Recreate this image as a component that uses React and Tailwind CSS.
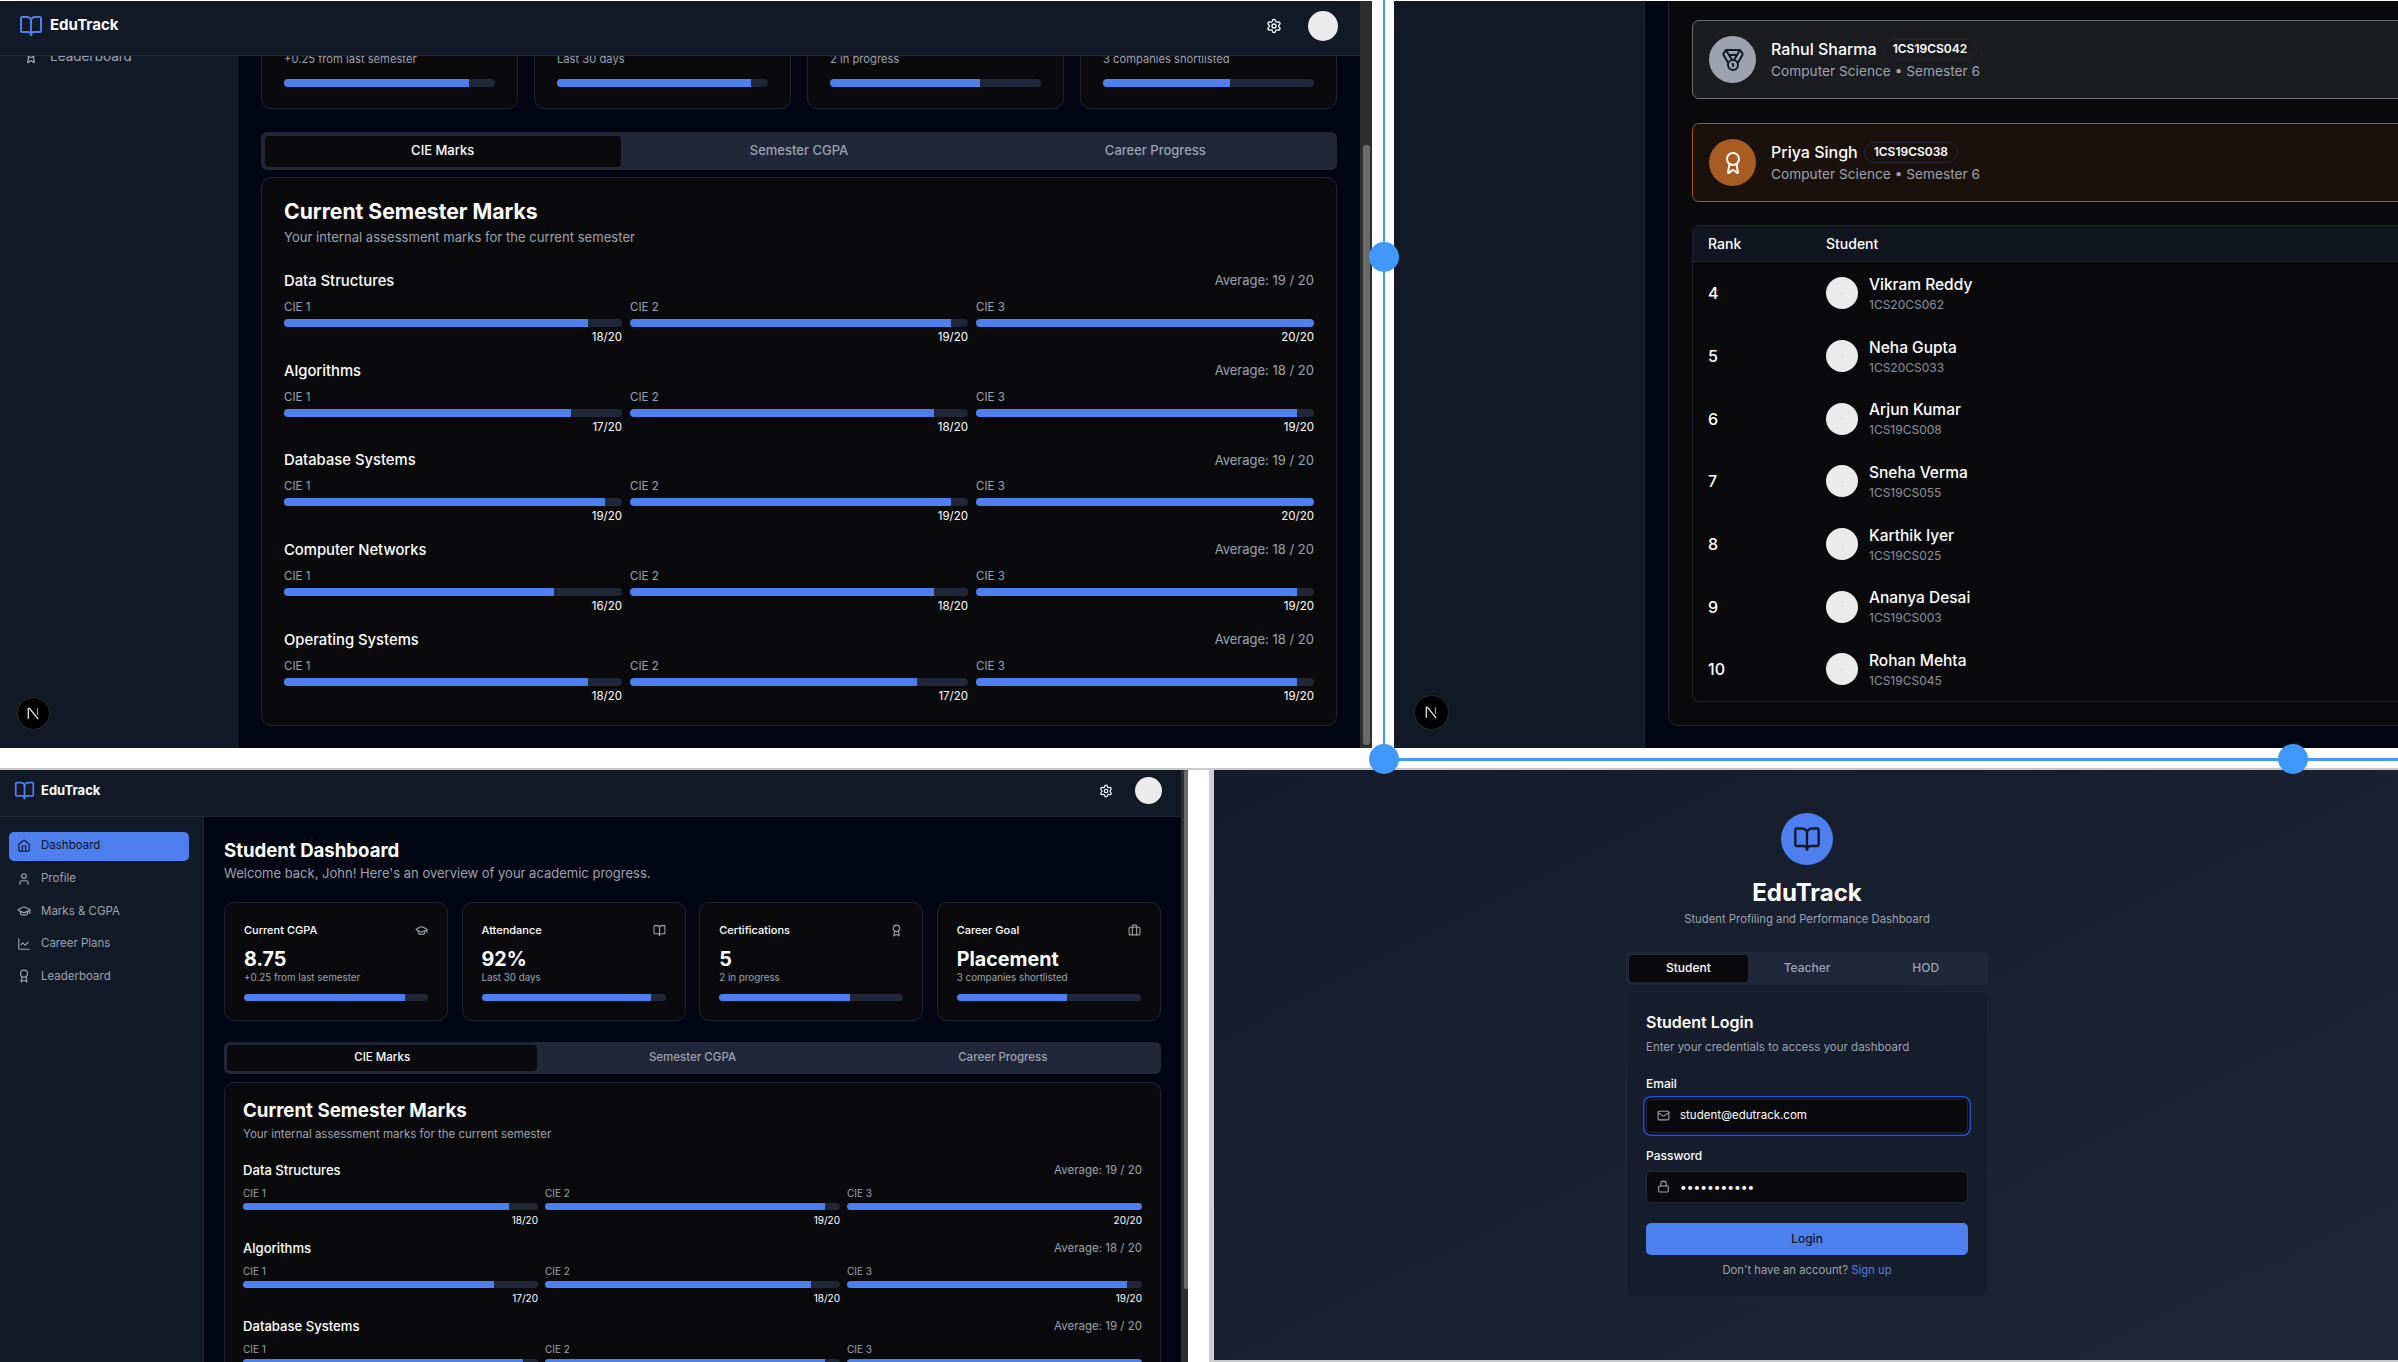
import { Award, BookOpen, Briefcase, ChartLine, GraduationCap, House, Lock, Mail, Medal, Settings, User } from "lucide-react";

const STATS = [
  { title: "Current CGPA", value: "8.75", note: "+0.25 from last semester", pct: 87.5, Icon: GraduationCap },
  { title: "Attendance", value: "92%", note: "Last 30 days", pct: 92, Icon: BookOpen },
  { title: "Certifications", value: "5", note: "2 in progress", pct: 71, Icon: Award },
  { title: "Career Goal", value: "Placement", note: "3 companies shortlisted", pct: 60, Icon: Briefcase },
];

const SUBJECTS = [
  { name: "Data Structures", avg: 19, marks: [18, 19, 20] },
  { name: "Algorithms", avg: 18, marks: [17, 18, 19] },
  { name: "Database Systems", avg: 19, marks: [19, 19, 20] },
  { name: "Computer Networks", avg: 18, marks: [16, 18, 19] },
  { name: "Operating Systems", avg: 18, marks: [18, 17, 19] },
];

const NAV = [
  { label: "Dashboard", Icon: House },
  { label: "Profile", Icon: User },
  { label: "Marks & CGPA", Icon: GraduationCap },
  { label: "Career Plans", Icon: ChartLine },
  { label: "Leaderboard", Icon: Award },
];

const RANKS = [
  { rank: 4, name: "Vikram Reddy", id: "1CS20CS062" },
  { rank: 5, name: "Neha Gupta", id: "1CS20CS033" },
  { rank: 6, name: "Arjun Kumar", id: "1CS19CS008" },
  { rank: 7, name: "Sneha Verma", id: "1CS19CS055" },
  { rank: 8, name: "Karthik Iyer", id: "1CS19CS025" },
  { rank: 9, name: "Ananya Desai", id: "1CS19CS003" },
  { rank: 10, name: "Rohan Mehta", id: "1CS19CS045" },
];

// the two dashboard windows are the same page at different sizes;
// the large one is scrolled, so what lies above its fold is left out
const LARGE = {
  scrolled: true,
  header: "h-[55px] pl-[19px] pr-[22px] pb-[5px]",
  logo: 24, logoText: "ml-[7px] text-[15px]",
  gear: 16, gearGap: "gap-[26px]", avatar: "size-[30px]",
  sidebar: "w-[238px] px-[10px] pt-0",
  nav: "-mt-[17px]", item: "h-[34px] pl-[13px] gap-[11px] text-[13.5px]", navIcon: 16,
  main: "w-[1122px] pl-[23px] -mt-[84px]",
  stats: "w-[1076px] gap-[16px]",
  stat: "px-[22px] pt-[78px] pb-[21px] h-[137px]", statTitle: "text-[12.5px] leading-[18px]", statIcon: 15,
  statValue: "mt-[6px] text-[27px] leading-[32px]", statNote: "text-[11.2px] leading-[16px]", statBar: "mt-[12px] h-[8px]",
  tabs: "mt-[23px] h-[38px] w-[1076px] p-[3.5px]", tabText: "text-[13px]",
  card: "mt-[7px] w-[1076px] px-[22px] pt-[19px] pb-[22.5px]",
  cardTitle: "text-[21.2px] leading-[28px]", cardSub: "mt-[4px] text-[13.1px] leading-[16px]",
  rows: "mt-[26px] gap-[16.7px]", rowHead: "h-[20px]", rowName: "text-[14.8px]", rowAvg: "text-[13px]", grid: "mt-[9px] gap-[8px]",
  cie: "text-[11.5px] leading-[14px]", bar: "mt-[5px] h-[8px]", val: "mt-[3px] text-[11.5px] leading-[14px]",
};

const SMALL = {
  scrolled: false,
  header: "h-[47px] pl-[14px] pr-[19px] pb-[5px]",
  logo: 21, logoText: "ml-[6px] text-[13px]",
  gear: 14, gearGap: "gap-[22px]", avatar: "size-[27px]",
  sidebar: "w-[204px] pl-[9px] pr-[14px] pt-[14.5px]",
  nav: "gap-[3.6px]", item: "h-[29px] pl-[8px] gap-[10px] text-[11.5px]", navIcon: 14,
  main: "w-[977px] pl-[20px] pt-[19px]",
  stats: "mt-[20px] w-[937px] gap-[13.3px]",
  stat: "px-[19px] pt-[19px] pb-[19px] h-[119px]", statTitle: "text-[11px] leading-[16px]", statIcon: 13,
  statValue: "mt-[8px] text-[19.7px] leading-[26px]", statNote: "-mt-[1px] text-[9.8px] leading-[14px]", statBar: "mt-[9px] h-[7px]",
  tabs: "mt-[21px] h-[32px] w-[937px] p-[3px]", tabText: "text-[11.5px]",
  card: "mt-[8px] w-[937px] px-[18px] pt-[16px] pb-[20px]",
  cardTitle: "text-[18.7px] leading-[24px]", cardSub: "mt-[4px] text-[11.5px] leading-[14px]",
  rows: "mt-[21px] gap-[13px]", rowHead: "h-[18px]", rowName: "text-[13.1px]", rowAvg: "text-[11.5px]", grid: "mt-[6px] gap-[7px]",
  cie: "text-[10px] leading-[14px]", bar: "mt-[3px] h-[7px]", val: "mt-[3px] text-[10px] leading-[14px]",
};

function Progress({ pct, className }) {
  return (
    <div className={`w-full overflow-hidden rounded-full bg-[#1f2739] ${className}`}>
      <div className="h-full bg-[#4e7fee]" style={{ width: `${pct}%` }} />
    </div>
  );
}

function NextBadge({ className }) {
  return (
    <div className={`absolute flex items-center justify-center rounded-full border border-[#2c2c2c] bg-black ${className}`}>
      <svg viewBox="0 0 18 18" className="size-[17px]" fill="none">
        <path d="M3.5 14.5V3.5h1.3L14 15" stroke="#f2f2f2" strokeWidth="1.3" />
        <path d="M13.2 3.5v7" stroke="#9a9a9a" strokeWidth="1.3" />
      </svg>
    </div>
  );
}

function Avatar({ className }) {
  return (
    <div className={`flex shrink-0 items-center justify-center rounded-full bg-[#ebebeb] ${className}`}>
      <span className="size-px bg-[#c4c4c4]" />
    </div>
  );
}

function Header({ s }) {
  return (
    <div className={`relative z-10 flex shrink-0 items-center justify-between border-b border-[#1e2635] bg-[#121a28] ${s.header}`}>
      <div className="flex items-center">
        <BookOpen size={s.logo} className="text-[#4e7fee]" />
        <span className={`font-bold text-white ${s.logoText}`}>EduTrack</span>
      </div>
      <div className={`flex items-center ${s.gearGap}`}>
        <Settings size={s.gear} className="text-white" />
        <Avatar className={s.avatar} />
      </div>
    </div>
  );
}

function Sidebar({ s }) {
  const items = s.scrolled ? NAV.slice(-1) : NAV;
  return (
    <div className={`shrink-0 border-r border-[#1e2635] bg-[#121a28] ${s.sidebar}`}>
      <div className={`flex flex-col ${s.nav}`}>
        {items.map(({ label, Icon }) => (
          <div
            key={label}
            className={`flex items-center rounded-[5px] ${s.item} ${label === "Dashboard" ? "bg-[#4e7fee] text-[#111827]" : "text-[#9ca3af]"}`}
          >
            <Icon size={s.navIcon} />
            {label}
          </div>
        ))}
      </div>
    </div>
  );
}

function StatCard({ s, stat }) {
  const { title, value, note, pct, Icon } = stat;
  return (
    <div className={`flex-1 rounded-[10px] border border-[#1c2536] bg-[#0a0a0c] ${s.stat}`}>
      {!s.scrolled && (
        <>
          <div className={`flex items-center justify-between font-medium text-white ${s.statTitle}`}>
            {title}
            <Icon size={s.statIcon} className="text-[#9ca3af]" />
          </div>
          <div className={`font-bold text-white ${s.statValue}`}>{value}</div>
        </>
      )}
      <div className={`text-[#9ca3af] ${s.statNote}`}>{note}</div>
      <Progress pct={pct} className={s.statBar} />
    </div>
  );
}

function Dashboard({ s }) {
  return (
    <div className="flex h-full flex-col overflow-hidden bg-[#020613]">
      <Header s={s} />
      <div className="flex min-h-0 flex-1 overflow-hidden">
        <Sidebar s={s} />
        <div className={`shrink-0 ${s.main}`}>
          {!s.scrolled && (
            <div>
              <h1 className="text-[18.6px] leading-[28px] font-bold text-white">Student Dashboard</h1>
              <p className="text-[13px] leading-[18px] text-[#9ca3af]">
                Welcome back, John! Here's an overview of your academic progress.
              </p>
            </div>
          )}
          <div className={`flex ${s.stats}`}>
            {STATS.map((stat) => (
              <StatCard key={stat.title} s={s} stat={stat} />
            ))}
          </div>
          <div className={`grid grid-cols-3 rounded-[6px] bg-[#1f2739] ${s.tabs}`}>
            <div className={`flex items-center justify-center rounded-[4px] bg-[#0a0a0c] font-medium text-white ${s.tabText}`}>CIE Marks</div>
            <div className={`flex items-center justify-center font-medium text-[#9ca3af] ${s.tabText}`}>Semester CGPA</div>
            <div className={`flex items-center justify-center font-medium text-[#9ca3af] ${s.tabText}`}>Career Progress</div>
          </div>
          <div className={`rounded-[10px] border border-[#1c2536] bg-[#0a0a0c] ${s.card}`}>
            <h2 className={`font-bold text-white ${s.cardTitle}`}>Current Semester Marks</h2>
            <p className={`text-[#9ca3af] ${s.cardSub}`}>Your internal assessment marks for the current semester</p>
            <div className={`flex flex-col ${s.rows}`}>
              {(s.scrolled ? SUBJECTS : SUBJECTS.slice(0, 3)).map((sub) => (
                <div key={sub.name}>
                  <div className={`flex items-center justify-between ${s.rowHead}`}>
                    <span className={`font-medium text-white ${s.rowName}`}>{sub.name}</span>
                    <span className={`text-[#9ca3af] ${s.rowAvg}`}>Average: {sub.avg} / 20</span>
                  </div>
                  <div className={`grid grid-cols-3 ${s.grid}`}>
                    {sub.marks.map((m, i) => (
                      <div key={i}>
                        <div className={`text-[#9ca3af] ${s.cie}`}>CIE {i + 1}</div>
                        <Progress pct={(m / 20) * 100} className={s.bar} />
                        <div className={`text-right text-white ${s.val}`}>{m}/20</div>
                      </div>
                    ))}
                  </div>
                </div>
              ))}
            </div>
          </div>
        </div>
      </div>
    </div>
  );
}

function TopStudent({ name, id, className, circle, Icon }) {
  return (
    <div className={`flex h-[79px] items-center rounded-[7px] border pl-[16px] ${className}`}>
      <div className={`flex size-[47px] shrink-0 items-center justify-center rounded-full ${circle}`}>
        <Icon size={24} />
      </div>
      <div className="ml-[15px]">
        <div className="flex items-center gap-[6px]">
          <span className="text-[16px] leading-[22px] font-medium text-white">{name}</span>
          <span className="flex h-[21px] items-center rounded-full border border-[#1f2937] px-[9px] text-[12px] font-semibold text-white">{id}</span>
        </div>
        <div className="mt-[1px] text-[13.7px] leading-[20px] text-[#9ca3af]">Computer Science • Semester 6</div>
      </div>
    </div>
  );
}

function Leaderboard() {
  return (
    <div className="relative flex h-full overflow-hidden bg-[#020613]">
      <div className="w-[251px] shrink-0 border-r border-[#1e2635] bg-[#121a28]" />
      <div className="min-w-0 flex-1 overflow-hidden pl-[23px]">
        <div className="-mt-[40px] w-[1100px] rounded-[10px] border border-[#1c2536] bg-[#0a0a0c] pt-[58px] pr-[24px] pb-[23px] pl-[23px]">
          <div className="flex flex-col gap-[24px]">
            <TopStudent name="Rahul Sharma" id="1CS19CS042" className="border-[#6b6e75] bg-[#1a1c20]" circle="bg-[#9ca3af] text-[#111827]" Icon={Medal} />
            <TopStudent name="Priya Singh" id="1CS19CS038" className="border-[#a0561e] bg-[#1a110d]" circle="bg-[#a65c22] text-white" Icon={Award} />
          </div>
          <div className="mt-[23px] overflow-hidden rounded-[7px] border border-[#1c2536]">
            <div className="flex h-[36px] items-center border-b border-[#1c2536] bg-[#10151f] text-[14px] font-medium text-white">
              <div className="w-[133px] pl-[15px]">Rank</div>
              <div>Student</div>
            </div>
            {RANKS.map((r) => (
              <div key={r.rank} className="flex h-[62.7px] items-center text-white">
                <div className="w-[133px] pl-[15px] text-[16px] font-medium">{r.rank}</div>
                <Avatar className="size-[32px]" />
                <div className="ml-[11px]">
                  <div className="text-[15.5px] leading-[22px] font-medium">{r.name}</div>
                  <div className="mt-[1px] text-[12px] leading-[16px] text-[#8a92a0]">{r.id}</div>
                </div>
              </div>
            ))}
          </div>
        </div>
      </div>
      <NextBadge className="bottom-[18px] left-[20px] size-[35px]" />
    </div>
  );
}

function Login() {
  return (
    <div className="flex h-full flex-col items-center bg-linear-to-br from-[#141b2b] to-[#1f2636] pt-[42.5px] pl-[2px]">
      <div className="flex size-[52px] items-center justify-center rounded-full bg-[#4e7fee] text-[#111827]">
        <BookOpen size={28} />
      </div>
      <h1 className="mt-[12px] text-[24px] leading-[32px] font-bold text-white">EduTrack</h1>
      <p className="mt-[2px] text-[11.3px] leading-[16px] text-[#9ca3af]">Student Profiling and Performance Dashboard</p>
      <div className="mt-[25px] grid h-[33px] w-[362px] grid-cols-3 rounded-[6px] bg-[#1f2739] p-[3px] text-[12px] font-medium">
        <div className="flex items-center justify-center rounded-[4px] bg-[#0a0a0c] text-white">Student</div>
        <div className="flex items-center justify-center text-[#9ca3af]">Teacher</div>
        <div className="flex items-center justify-center text-[#9ca3af]">HOD</div>
      </div>
      <div className="mt-[6px] w-[362px] rounded-[8px] border border-[#1c2536] bg-[#161d2c] px-[19px] pt-[18px] pb-[18px]">
        <h2 className="text-[16px] leading-[24px] font-semibold text-white">Student Login</h2>
        <p className="mt-[5px] text-[11.5px] leading-[16px] text-[#9ca3af]">Enter your credentials to access your dashboard</p>
        <div className="mt-[21px] text-[12px] leading-[16px] font-medium text-white">Email</div>
        <div className="mt-[7px] flex h-[34px] items-center rounded-[5px] border border-[#1f2937] bg-[#0a0a0c] pl-[10px] ring-[1.5px] ring-[#2450cf] ring-offset-[1.5px] ring-offset-[#0a0a0c]">
          <Mail size={13} className="text-[#9ca3af]" />
          <input readOnly value="student@edutrack.com" className="ml-[10px] w-[280px] bg-transparent text-[11.5px] text-white outline-none" />
        </div>
        <div className="mt-[15px] text-[12px] leading-[16px] font-medium text-white">Password</div>
        <div className="mt-[7px] flex h-[32px] items-center rounded-[5px] border border-[#1f2937] bg-[#0a0a0c] pl-[10px]">
          <Lock size={13} className="text-[#9ca3af]" />
          <input readOnly type="password" value="password123" className="ml-[10px] w-[280px] bg-transparent text-[12px] text-white outline-none" />
        </div>
        <div className="mt-[20px] flex h-[32px] items-center justify-center rounded-[5px] bg-[#4e7fee] text-[12px] font-medium text-[#111827]">Login</div>
        <p className="mt-[7px] text-center text-[11.3px] leading-[16px] text-[#9ca3af]">
          Don't have an account? <span className="text-[#4e7fee]">Sign up</span>
        </p>
      </div>
    </div>
  );
}

function Scrollbar({ thumb, className }) {
  return (
    <div className={`shrink-0 bg-[#2e2e2e] ${className}`}>
      <div className={`rounded-[3px] bg-[#6b6b6b] ${thumb}`} />
    </div>
  );
}

export default function App() {
  return (
    <div className="relative h-[1362px] w-[2398px] overflow-hidden bg-white font-[Inter,sans-serif]">
      <div className="flex h-[748px] pt-px">
        <div className="relative h-full w-[1360px] shrink-0">
          <Dashboard s={LARGE} />
          <NextBadge className="bottom-[18px] left-[17px] size-[33px]" />
        </div>
        <Scrollbar className="w-[12px] pt-[144px] pl-[3px]" thumb="h-[600px] w-[7px]" />
        <div className="w-[22px] shrink-0" />
        <div className="h-full w-[1004px] shrink-0">
          <Leaderboard />
        </div>
      </div>
      <div className="h-[22px] border-b-2 border-[#c9c9c9] bg-white" />
      <div className="flex h-[592px]">
        <div className="h-full w-[1181px] shrink-0">
          <Dashboard s={SMALL} />
        </div>
        <Scrollbar className="w-[7px] pt-0 pl-[3px]" thumb="h-[519px] w-[4px]" />
        <div className="w-[21px] shrink-0" />
        <div className="w-[5px] shrink-0 bg-[#cfcfcf]" />
        <div className="h-full w-[1184px] shrink-0 border-b-2 border-[#c9c9c9]">
          <Login />
        </div>
      </div>

      {/* selection frame drawn over the collage */}
      <div className="absolute top-0 left-[1382.5px] h-[758px] w-[2.5px] bg-[#4098fc]" />
      <div className="absolute top-[758px] left-[1383px] h-[2.5px] w-[1015px] bg-[#4098fc]" />
      <div className="absolute top-[242px] left-[1369px] size-[30px] rounded-full bg-[#4098fc]" />
      <div className="absolute top-[744px] left-[1369px] size-[30px] rounded-full bg-[#4098fc]" />
      <div className="absolute top-[744px] left-[2278px] size-[30px] rounded-full bg-[#4098fc]" />
    </div>
  );
}
